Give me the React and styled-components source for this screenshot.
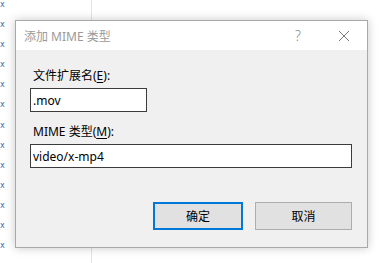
import React from "react";
import styled, { createGlobalStyle } from "styled-components";

const GlobalStyle = createGlobalStyle`
  html, body {
    margin: 0;
    padding: 0;
    width: 387px;
    height: 263px;
    overflow: hidden;
  }
  body {
    background:
      linear-gradient(to right, transparent 91px, #dbe6f1 91px, #dbe6f1 92px, transparent 92px),
      #ffffff;
    font-family: "Noto Sans", "Noto Sans CJK SC", sans-serif;
    font-size: 12px;
    color: #000;
  }
`;

const Desk = styled.div`
  display: flex;
  align-items: flex-start;
  height: 263px;
`;

const Strip = styled.div`
  width: 6px;
  display: flex;
  flex-direction: column;
  padding-top: 1px;
`;

const Glyph = styled.span`
  display: block;
  height: 20.1px;
  line-height: 8px;
  font-size: 8px;
  color: #2f6db5;
  font-family: "DejaVu Sans", sans-serif;
`;

const Dialog = styled.div`
  margin: 20px 0 0 9px;
  width: 351px;
  height: 226px;
  border: 1px solid #a9a9a9;
  background: #f0f0f0;
  box-shadow: 0 0 9px rgba(0, 0, 0, 0.22);
  display: flex;
  flex-direction: column;
`;

const TitleBar = styled.div`
  height: 29px;
  background: #fff;
  display: flex;
  align-items: center;
  padding-left: 8px;
`;

const Title = styled.div`
  flex: 1;
  color: #9a9a9a;
  font-size: 12px;
  padding-top: 1px;
`;

const TitleButton = styled.div`
  width: ${(p) => p.$w}px;
  height: 29px;
  display: flex;
  align-items: center;
  justify-content: center;
  color: #8a8a8a;
  font-size: 14px;
  font-family: "Noto Sans", sans-serif;
  font-weight: 300;
`;

const Body = styled.div`
  flex: 1;
  display: flex;
  flex-direction: column;
  padding: 17px 15px 17px 14px;
`;

const Label = styled.div`
  line-height: 17px;
  margin-top: ${(p) => p.$top || 0}px;
  margin-left: 3px;
  margin-bottom: 4px;
`;

const Key = styled.span`
  text-decoration: underline;
  text-underline-offset: 2px;
`;

const Input = styled.input`
  box-sizing: border-box;
  width: ${(p) => p.$w}px;
  height: 24px;
  margin: 0;
  border: 1px solid #3c3c3c;
  background: #fff;
  padding: 0 2px;
  font: inherit;
  font-size: 12px;
  color: #000;
  outline: none;
`;

const Buttons = styled.div`
  margin-top: auto;
  display: flex;
  justify-content: flex-end;
  gap: 12px;
`;

const Button = styled.button`
  box-sizing: border-box;
  width: ${(p) => p.$w}px;
  height: 28px;
  margin: 0;
  background: #e1e1e1;
  border: ${(p) => (p.$primary ? "2px solid #0078d7" : "1px solid #adadad")};
  font: inherit;
  font-size: 12px;
  color: #000;
  padding: 0;
`;

export default function App() {
  const glyphs = Array.from({ length: 13 });
  return (
    <>
      <GlobalStyle />
      <Desk>
        <Strip>
          {glyphs.map((_, i) => (
            <Glyph key={i}>x</Glyph>
          ))}
        </Strip>
        <Dialog>
          <TitleBar>
            <Title>添加 MIME 类型</Title>
            <TitleButton $w={46}>?</TitleButton>
            <TitleButton $w={46}>
              <svg width="12" height="12" viewBox="0 0 12 12">
                <path d="M1 1L11 11M11 1L1 11" stroke="#7a7a7a" strokeWidth="1" fill="none" />
              </svg>
            </TitleButton>
          </TitleBar>
          <Body>
            <Label>
              文件扩展名(<Key>E</Key>):
            </Label>
            <Input $w={117} defaultValue=".mov" />
            <Label $top={11}>
              MIME 类型(<Key>M</Key>):
            </Label>
            <Input $w={322} defaultValue="video/x-mp4" />
            <Buttons>
              <Button $primary $w={90}>确定</Button>
              <Button $w={97}>取消</Button>
            </Buttons>
          </Body>
        </Dialog>
      </Desk>
    </>
  );
}
